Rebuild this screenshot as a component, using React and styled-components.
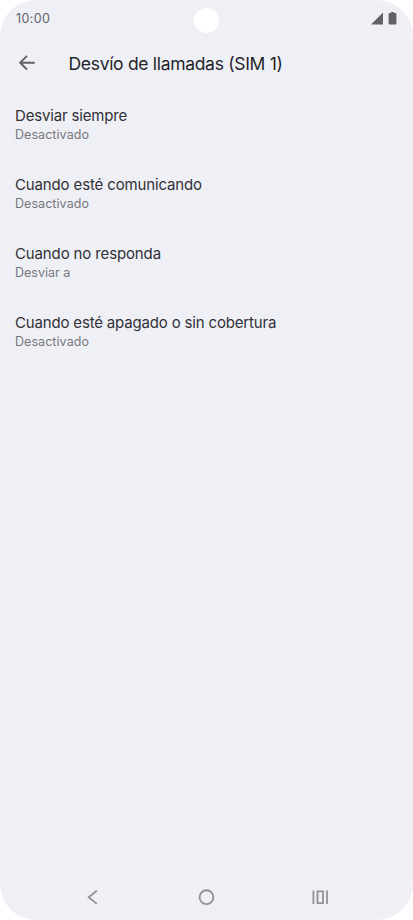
import React from 'react';
import styled, { createGlobalStyle } from 'styled-components';

const Global = createGlobalStyle`
  * { box-sizing: border-box; }
  body { margin: 0; background: #fff; font-family: Inter, "Noto Sans", sans-serif; }
`;
const Phone = styled.div`
  width: 413px;
  height: 920px;
  display: flex;
  flex-direction: column;
  position: relative;
  overflow: hidden;
  border-radius: 36px;
  background: linear-gradient(90deg, #f2f0f7 0 9px, #eff0f6 9px 402px, #f2f0f7 402px);
`;
const StatusBar = styled.header`
  height: 37px;
  padding: 0 16px;
  display: flex;
  align-items: center;
  justify-content: space-between;
  color: #626267;
`;
const Time = styled.span`
  padding-top: 1px;
  font-size: 12.5px;
  line-height: 16px;
  letter-spacing: ${p => p.$track}px;
`;
const StatusIcons = styled.div`
  display: flex;
  gap: 5px;
`;
const Camera = styled.div`
  position: absolute;
  top: 8px;
  left: 194px;
  width: 25px;
  height: 25px;
  border-radius: 50%;
  background: #fff;
`;
const TitleBar = styled.div`
  height: 52px;
  padding-left: 18px;
  display: flex;
  align-items: center;
  gap: 32.5px;
`;
const BackButton = styled.button`
  width: 18px;
  height: 18px;
  padding: 0;
  border: 0;
  background: none;
  display: flex;
  color: #626267;
`;
const Title = styled.h1`
  margin: 0;
  padding-top: 2px;
  font-size: 17.5px;
  line-height: 24px;
  font-weight: 400;
  white-space: nowrap;
  color: #232429;
  letter-spacing: ${p => p.$track}px;
`;
const List = styled.main`
  flex: 1;
  padding: 17px 15px 0;
  display: flex;
  flex-direction: column;
  gap: 31px;
`;
const Item = styled.section`
  height: 38px;
`;
const Label = styled.div`
  font-size: 15px;
  line-height: 20px;
  white-space: nowrap;
  color: #303035;
  letter-spacing: ${p => p.$track}px;
`;
const Value = styled.div`
  font-size: 12.5px;
  line-height: 18px;
  color: #77777c;
  letter-spacing: ${p => p.$track}px;
`;
const NavBar = styled.nav`
  height: 46px;
  padding: 0 84px;
  display: flex;
  align-items: center;
  justify-content: space-between;
  color: #929297;
`;

const rows = [
  { label: 'Desviar siempre', track: -0.17, value: 'Desactivado', valueTrack: 0.06 },
  { label: 'Cuando esté comunicando', track: -0.14, value: 'Desactivado', valueTrack: 0.06 },
  { label: 'Cuando no responda', track: -0.13, value: 'Desviar a', valueTrack: 0 },
  { label: 'Cuando esté apagado o sin cobertura', track: -0.17, value: 'Desactivado', valueTrack: 0.06 },
];

export default function App() {
  return (
    <Phone>
      <Global />
      <StatusBar>
        <Time $track={0.4}>10:00</Time>
        <StatusIcons>
          <svg width="12" height="13" viewBox="0 0 12 13" fill="currentColor"><path d="M12 .5V12.5H0Z" /></svg>
          <svg width="9" height="13" viewBox="0 0 9 13" fill="currentColor"><path d="M3 0H6V1H7.4Q8.4 1 8.4 2V11.5Q8.4 12.5 7.4 12.5H1.6Q.6 12.5 .6 11.5V2Q.6 1 1.6 1H3Z" /></svg>
        </StatusIcons>
      </StatusBar>
      <Camera />
      <TitleBar>
        <BackButton aria-label="Atrás">
          <svg width="18" height="18" viewBox="0 0 18 18" fill="none" stroke="currentColor" strokeWidth="1.9"><path d="M9 1.9 2.2 8.7 9 15.5M2.2 8.7H16.8" /></svg>
        </BackButton>
        <Title $track={-0.31}>Desvío de llamadas (SIM 1)</Title>
      </TitleBar>
      <List>
        {rows.map(r => (
          <Item key={r.label}>
            <Label $track={r.track}>{r.label}</Label>
            <Value $track={r.valueTrack}>{r.value}</Value>
          </Item>
        ))}
      </List>
      <NavBar>
        <svg width="17" height="17" viewBox="0 0 17 17" fill="none" stroke="currentColor" strokeWidth="1.8"><path d="M12.8 1.8 4.7 8.3 12.8 14.9" /></svg>
        <svg width="17" height="17" viewBox="0 0 17 17" fill="none" stroke="currentColor" strokeWidth="1.9"><circle cx="8.5" cy="8.2" r="6.9" /></svg>
        <svg width="17" height="17" viewBox="0 0 17 17" fill="none" stroke="currentColor" strokeWidth="1.8"><path d="M1.4 1.5V15M15 1.5V15M5.5 2.4H11V14.1H5.5Z" /></svg>
      </NavBar>
    </Phone>
  );
}
